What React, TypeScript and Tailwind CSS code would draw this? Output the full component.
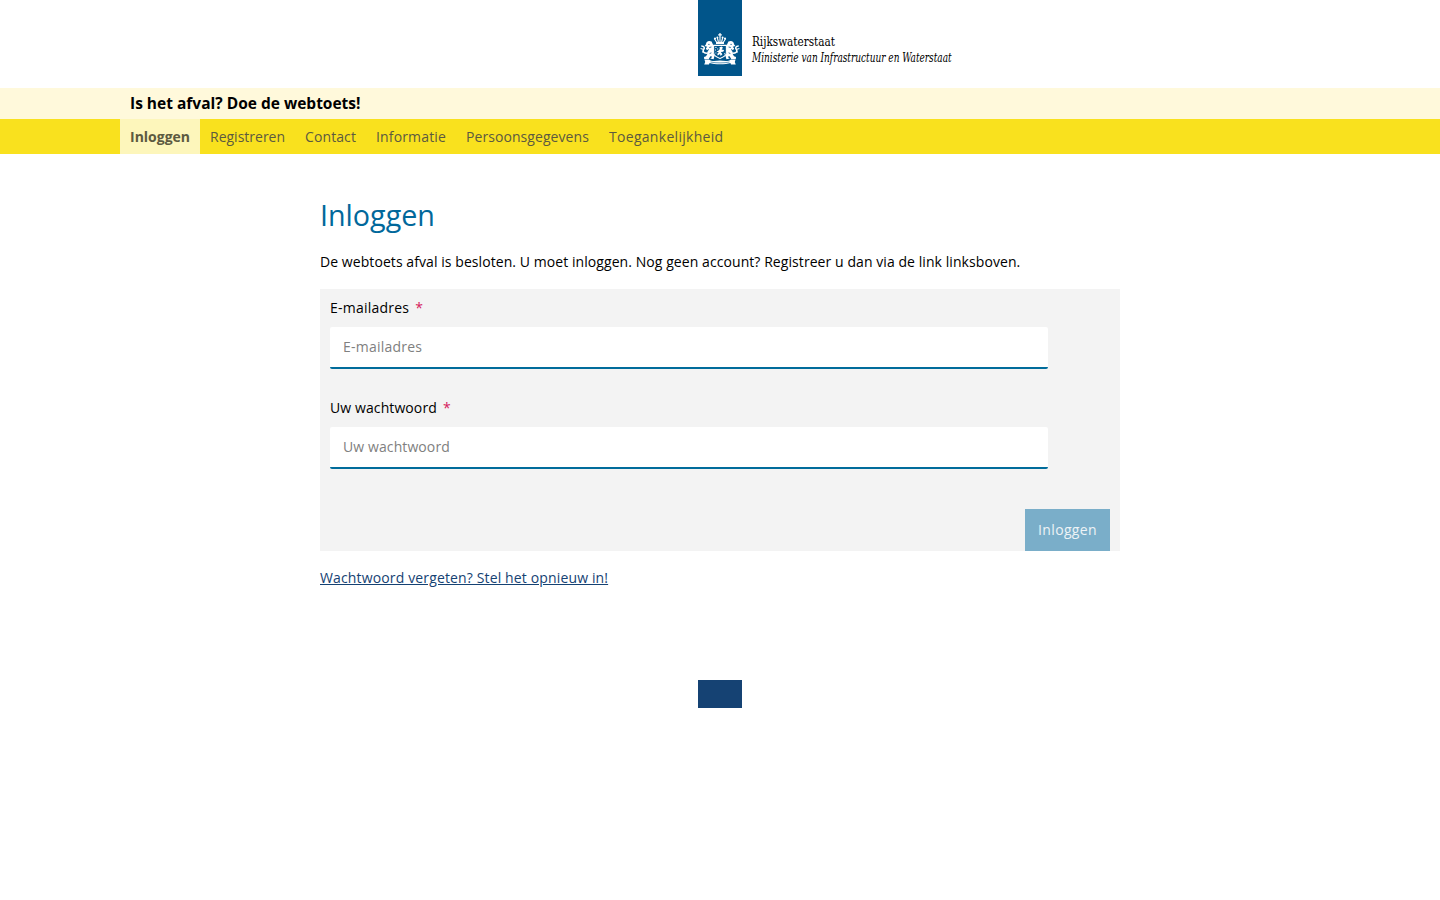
const navItems = [
  { label: "Registreren", className: "w-[95px]" },
  { label: "Contact", className: "w-[71px] tracking-[0.1px]" },
  { label: "Informatie", className: "w-[90px] tracking-[0.15px]" },
  { label: "Persoonsgegevens", className: "w-[143px] tracking-[0.07px]" },
  { label: "Toegankelijkheid", className: "w-[134px] tracking-[0.3px]" },
];

function Lion() {
  return (
    <g>
      <path d="M11.6 8.6 C9 7 5.8 8.4 6 11.2 L4.6 13 L7.2 13.8 L5.8 15.4 L7 17.2 L9.2 15.8 C8.4 18 6.8 18.6 7.2 21.2 L6 23.2 L4 24 L4.2 26 L8.8 26 L10.2 23.4 L11.4 23 L11.8 24.4 L10.2 25.6 L13.6 26.2 L14.6 22.6 L13 19.2 L13.6 16.4 L13.4 12.5 Z" fill="#fff" />
      <path d="M1.3 13 C4.6 13 4.9 15 3.4 16.8 C2.4 18.6 4 20.4 7.6 20.2" fill="none" stroke="#fff" strokeWidth="1.6" />
      <path d="M0.6 15.4 L3 16.2 M2.2 19.2 L3.8 18.6" stroke="#fff" strokeWidth="1.1" />
      <path d="M8.2 11.4 H9.6 M9.2 14.5 L11.4 14 M9.6 20.6 L11.4 19.8" stroke="#01558a" strokeWidth="0.8" />
    </g>
  );
}

function CoatOfArms() {
  return (
    <svg viewBox="0 0 40 34" className="h-[34px] w-10" aria-hidden="true">
      <g fill="#fff">
        <path d="M19.4 0 H20.6 V1.2 H21.8 V2.4 H20.6 V4.2 H19.4 V2.4 H18.2 V1.2 H19.4 Z" />
        <circle cx="15" cy="5.6" r="1.1" />
        <circle cx="25" cy="5.6" r="1.1" />
        <circle cx="17.4" cy="4.5" r="1" />
        <circle cx="22.6" cy="4.5" r="1" />
        <path d="M16 8.9 H24 V11 H16 Z" />
      </g>
      <path d="M16.6 9.2 L14.6 6 M18.4 9 L17.4 5 M20 9 V3.8 M21.6 9 L22.6 5 M23.4 9.2 L25.4 6" stroke="#fff" strokeWidth="1.1" />
      <Lion />
      <g transform="translate(40 0) scale(-1 1)">
        <Lion />
      </g>
      <path d="M13.6 12.4 H26.4 V19.8 C26.4 22.6 22.8 24.4 20 25.4 C17.2 24.4 13.6 22.6 13.6 19.8 Z" fill="#01558a" stroke="#fff" strokeWidth="1.1" />
      <path d="M19.4 14.2 L21.6 13.4 L23 14.8 L21.6 16.4 L24.2 17 L23.2 18.8 L20.8 19 L22.4 21.2 L20.6 23 L20 21 L17.8 22.4 L17.2 21 L18.8 19.2 L16.4 18.8 L18.6 17.4 L19.8 16 Z" fill="#fff" />
      <path d="M15.2 14.4 H16.6 M17.2 16 H18.2 M15 17 H16 M15.4 20 H16.4 M24 20.8 H25" stroke="#fff" strokeWidth="0.9" />
      <path d="M4.4 26.6 L9 26.4 C12 28.8 16 27.6 20 27.6 C24 27.6 28 28.8 31 26.4 L35.6 26.6 L34.8 29 L35.8 31.6 H31 L30.4 30 C26 31.8 14 31.8 9.6 30 L9 31.6 H4.2 L5.2 29 Z" fill="#fff" />
      <path d="M10.5 29 C16 30.2 24 30.2 29.5 29" fill="none" stroke="#01558a" strokeWidth="0.6" />
    </svg>
  );
}

function Field({ label, type, className }: { label: string; type: string; className: string }) {
  return (
    <label className="block h-[100px] pt-[9px]">
      <span className="flex h-5 items-center gap-[6px] text-sm leading-5">
        <span className={className}>{label}</span>
        <span className="text-[#d5205c]">*</span>
      </span>
      <input
        type={type}
        placeholder={label}
        className={`mt-[9px] block h-[42px] w-[718px] rounded-[2px] border-b-2 border-[#006c9b] bg-white px-[13px] pb-[2px] text-sm placeholder:text-[#808080] ${className}`}
      />
    </label>
  );
}

export default function App() {
  return (
    <div className="min-h-screen bg-white font-['Open_Sans',sans-serif] text-sm text-black">
      <header className="flex h-[88px] pl-[698px]">
        <div className="flex h-[76px] w-11 flex-col items-center bg-[#01558a] pt-[33px]">
          <CoatOfArms />
        </div>
        <div className="pt-[34px] pl-[10px] font-['DejaVu_Serif_Condensed','DejaVu_Serif',serif] text-[12.5px] leading-4 whitespace-nowrap">
          <div className="origin-left scale-x-[0.93]">Rijkswaterstaat</div>
          <div className="origin-left scale-x-[0.797] italic">Ministerie van Infrastructuur en Waterstaat</div>
        </div>
      </header>
      <div className="flex h-[31px] items-center bg-[#fff9db] pl-[130px] text-[15.5px] font-bold">Is het afval? Doe de webtoets!</div>
      <nav className="flex h-[35px] bg-[#f9e11e] pl-[120px] leading-[35px] text-[#5c5a40]">
        <a className="w-20 bg-[#fdf6bb] pl-[10px] font-bold">Inloggen</a>
        {navItems.map((item) => (
          <a key={item.label} className={`pl-[10px] whitespace-nowrap ${item.className}`}>
            {item.label}
          </a>
        ))}
      </nav>
      <main className="mx-auto w-[800px] pt-[41px]">
        <h1 className="h-10 text-[28.7px] leading-10 text-[#01689b]">Inloggen</h1>
        <p className="mt-[17px] h-5 leading-5 tracking-[0.07px] whitespace-nowrap">
          De webtoets afval is besloten. U moet inloggen. Nog geen account? Registreer u dan via de link linksboven.
        </p>
        <form className="mt-[17px] h-[262px] bg-[#f3f3f3] px-[10px]">
          <Field label="E-mailadres" type="email" className="tracking-[0.22px]" />
          <Field label="Uw wachtwoord" type="password" className="tracking-[0.1px]" />
          <div className="flex justify-end pt-5">
            <button type="button" className="h-[42px] w-[85px] bg-[#7aaec9] tracking-[0.35px] text-[#edf3f6]">
              Inloggen
            </button>
          </div>
        </form>
        <a className="mt-[17px] block h-5 leading-5 tracking-[0.14px] text-[#154273] underline underline-offset-1">
          Wachtwoord vergeten? Stel het opnieuw in!
        </a>
      </main>
      <footer className="mt-[92px] flex justify-center">
        <div className="h-7 w-11 bg-[#154273]" />
      </footer>
    </div>
  );
}
